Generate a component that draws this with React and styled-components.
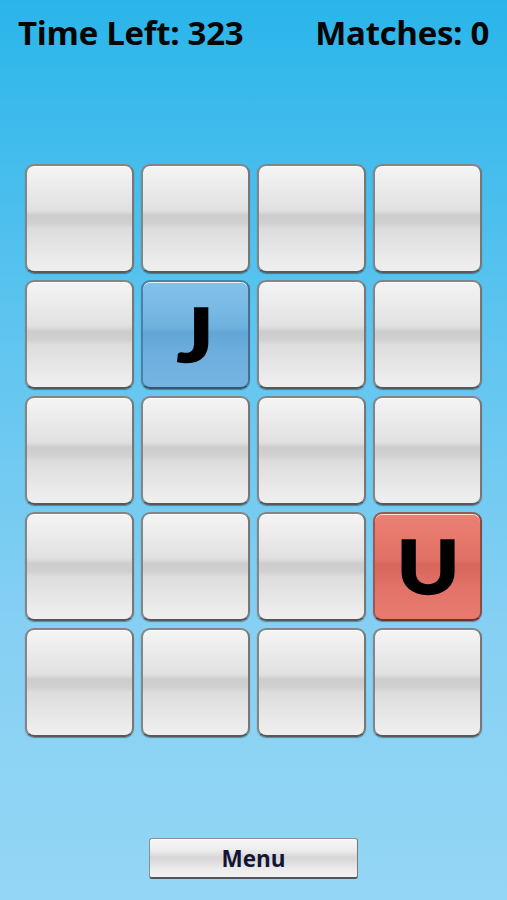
import React from 'react';
import styled, { createGlobalStyle, css } from 'styled-components';

const GlobalStyle = createGlobalStyle`
  html, body {
    margin: 0;
    padding: 0;
  }
  body {
    font-family: "Open Sans", "Noto Sans", "DejaVu Sans", sans-serif;
  }
`;

const Screen = styled.div`
  display: flex;
  flex-direction: column;
  height: 900px;
  background: linear-gradient(to bottom, #2ab5ea 0%, #5cc4ef 35%, #86d0f3 70%, #94d6f5 100%);
  overflow: hidden;
`;

const Header = styled.div`
  display: flex;
  justify-content: space-between;
  align-items: center;
  padding: 10px 18px 0 18px;
  height: 44px;
`;

const Stat = styled.span`
  font-size: 33px;
  font-weight: 700;
  color: #050505;
  line-height: 1;
  letter-spacing: -0.3px;
`;

const Board = styled.div`
  display: grid;
  grid-template-columns: repeat(4, 109px);
  grid-auto-rows: 109px;
  gap: 7px;
  justify-content: center;
  margin-top: 110px;
`;

const faces = {
  hidden: css`
    border-color: #858585 #777 #585858 #858585;
    background: linear-gradient(
      to bottom,
      #f4f4f4 0%,
      #ebebeb 20%,
      #e1e1e1 42%,
      #cdcdcd 47%,
      #cfcfcf 54%,
      #dddddd 60%,
      #e9e9e9 85%,
      #efefef 100%
    );
  `,
  blue: css`
    border-color: #4f7fa3 #466f90 #34556f #4f7fa3;
    background: linear-gradient(
      to bottom,
      #82c1ea 0%,
      #79bae5 25%,
      #6eb1de 44%,
      #62a6d5 48%,
      #66a9d8 56%,
      #6eafdf 70%,
      #74b4e2 100%
    );
  `,
  red: css`
    border-color: #9a5a52 #8a4d46 #643630 #9a5a52;
    background: linear-gradient(
      to bottom,
      #ec8074 0%,
      #e6776b 25%,
      #e07065 44%,
      #d7675b 48%,
      #da6a5f 56%,
      #e3736a 70%,
      #e87a70 100%
    );
  `,
};

const Tile = styled.div`
  box-sizing: border-box;
  display: flex;
  align-items: center;
  justify-content: center;
  border: 2px solid;
  border-radius: 9px;
  box-shadow: inset 0 1px 0 rgba(255, 255, 255, 0.8), 0 1px 1px rgba(0, 0, 0, 0.35);
  ${({ $face }) => faces[$face || 'hidden']}
`;

const Letter = styled.span`
  font-family: Lato, "Open Sans", sans-serif;
  font-size: 75px;
  font-weight: 900;
  color: #000;
  line-height: 1;
  margin-top: -2px;
  transform: scaleX(1.12);
  -webkit-text-stroke: 1.5px #000;
`;

const Spacer = styled.div`
  flex: 1;
`;

const MenuButton = styled.button`
  align-self: center;
  box-sizing: border-box;
  width: 209px;
  height: 41px;
  margin-bottom: 21px;
  border: 1px solid #8e8e8e;
  border-bottom: 2px solid #555;
  border-right-color: #777;
  border-radius: 3px;
  background: linear-gradient(
    to bottom,
    #f6f6f6 0%,
    #ececec 30%,
    #d6d6d6 48%,
    #dadada 56%,
    #ececec 80%,
    #f2f2f2 100%
  );
  box-shadow: inset 0 1px 0 #fff;
  font-family: "Open Sans", "Noto Sans", sans-serif;
  font-size: 22.5px;
  font-weight: 700;
  color: #141436;
  padding: 0;
  cursor: pointer;
`;

const opened = { 5: { face: 'blue', letter: 'J' }, 15: { face: 'red', letter: 'U' } };

export default function App() {
  const tiles = Array.from({ length: 20 }, (_, i) => opened[i] || { face: 'hidden' });
  return (
    <>
      <GlobalStyle />
      <Screen>
        <Header>
          <Stat>Time Left: 323</Stat>
          <Stat>Matches: 0</Stat>
        </Header>
        <Board>
          {tiles.map((t, i) => (
            <Tile key={i} $face={t.face}>
              {t.letter && <Letter>{t.letter}</Letter>}
            </Tile>
          ))}
        </Board>
        <Spacer />
        <MenuButton type="button">Menu</MenuButton>
      </Screen>
    </>
  );
}
